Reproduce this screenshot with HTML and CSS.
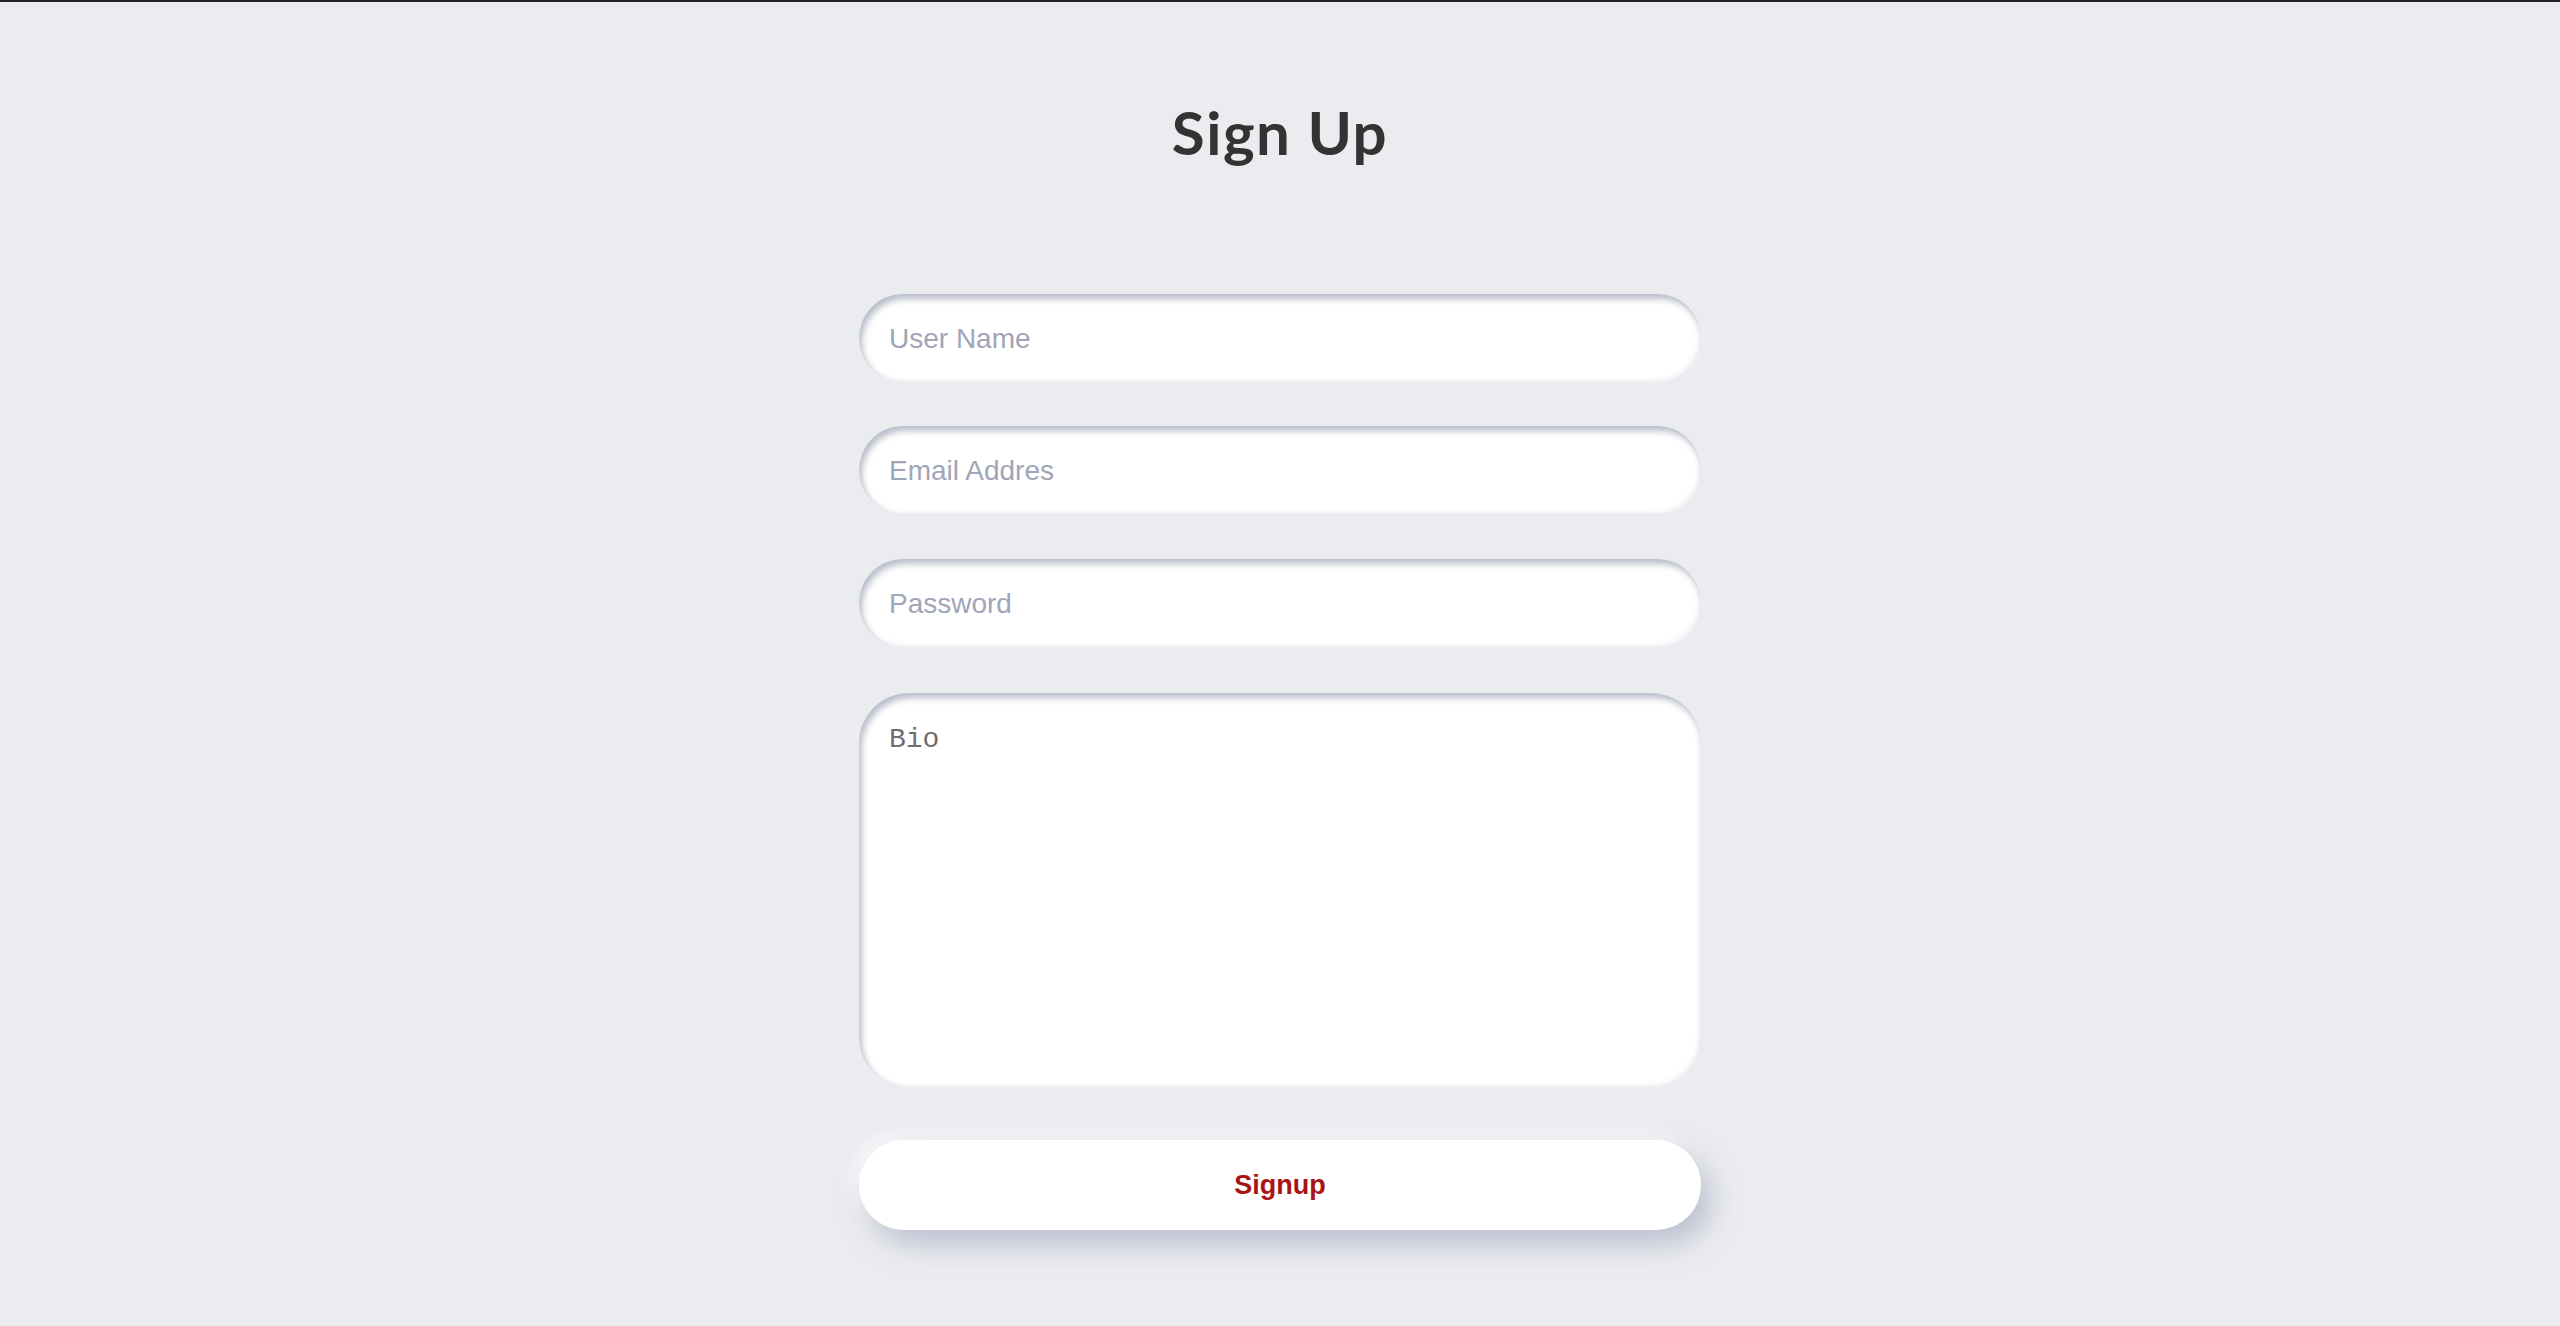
FILE: index.html
```html
<!DOCTYPE html>
<html>
<head>
<meta charset="utf-8">
<link rel="stylesheet" href="styles.css">
</head>
<body>
<div class="page">
  <h1 class="title">Sign Up</h1>
  <form class="form">
    <input class="field" type="text" placeholder="User Name">
    <input class="field" type="email" placeholder="Email Addres">
    <input class="field" type="password" placeholder="Password">
    <textarea class="bio" placeholder="Bio"></textarea>
    <button class="btn" type="button">Signup</button>
  </form>
</div>
</body>
</html>
```
FILE: styles.css
```css
html, body {
  margin: 0;
  padding: 0;
  background: #ebecf0;
}
body {
  border-top: 2px solid #232323;
  min-height: 1324px;
}
.page {
  display: flex;
  flex-direction: column;
  align-items: center;
}
.title {
  margin: 100px 0 0 0;
  font-family: Lato, "Open Sans", sans-serif;
  font-weight: 700;
  font-size: 60px;
  line-height: 1;
  color: #333333;
  letter-spacing: 1.5px;
}
.form {
  margin-top: 132px;
  width: 842px;
  display: flex;
  flex-direction: column;
}
.field, .bio {
  box-sizing: border-box;
  width: 100%;
  border: none;
  outline: none;
  background: #ffffff;
  box-shadow: inset 3px 5px 6px rgba(140, 146, 168, 0.6), inset -2px -2px 5px rgba(205, 208, 220, 0.3);
}
.field {
  height: 88px;
  border-radius: 44px;
  padding: 2px 30px 0;
  font-family: "Liberation Sans", Arial, sans-serif;
  font-size: 28px;
  color: #333;
  margin-bottom: 44px;
}
.field:nth-child(2) {
  margin-bottom: 45px;
}
.field:nth-child(3) {
  margin-bottom: 46px;
}
.field::placeholder {
  color: #a0a5b8;
}
.bio {
  height: 394px;
  border-radius: 50px;
  padding: 31px 30px 26px;
  font-family: "Liberation Mono", "Courier New", monospace;
  font-size: 28px;
  color: #333;
  resize: none;
  display: block;
}
.bio::placeholder {
  color: #6e6e6e;
}
.btn {
  margin-top: 53px;
  height: 90px;
  width: 100%;
  border: none;
  border-radius: 45px;
  background: #ffffff;
  font-family: "Liberation Sans", Arial, sans-serif;
  font-weight: 700;
  font-size: 27px;
  color: #a81414;
  box-shadow: 10px 14px 28px rgba(150, 156, 180, 0.55), -6px -6px 16px rgba(255, 255, 255, 0.7);
  cursor: pointer;
}
```
